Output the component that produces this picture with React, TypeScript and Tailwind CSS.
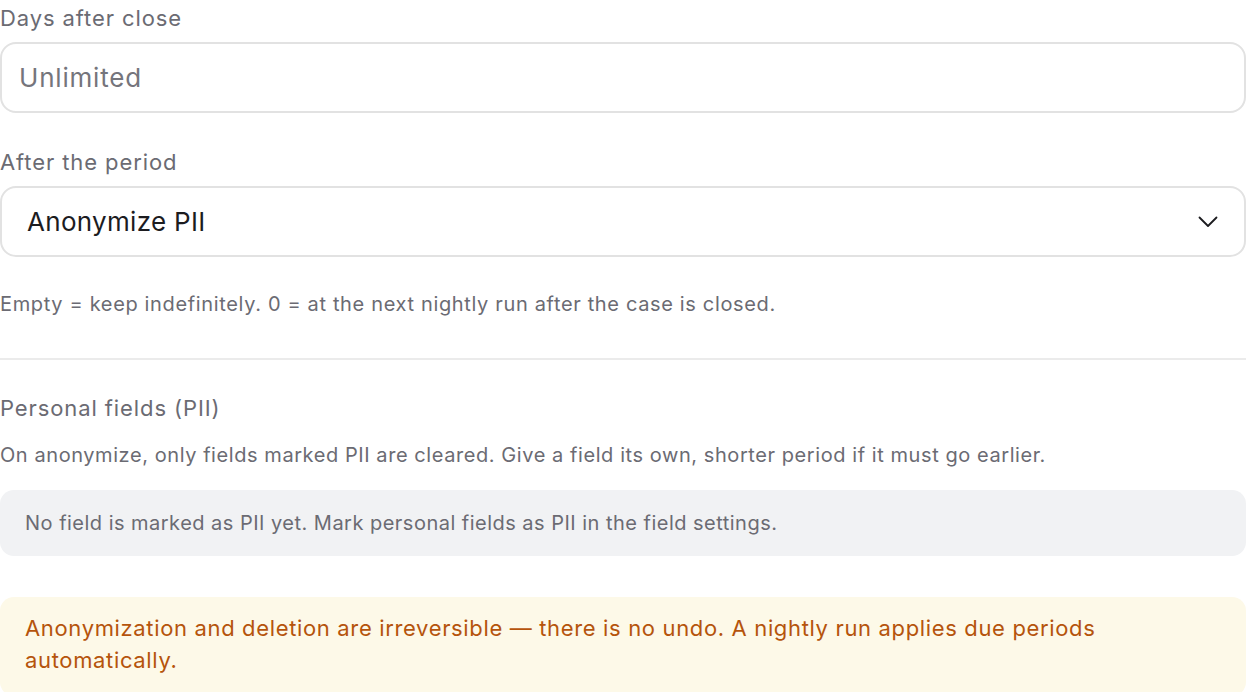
import React from "react";

export default function App() {
  return (
    <div className="w-[1246px] h-[692px] overflow-hidden bg-white" style={{ fontFamily: "Inter, 'Noto Sans', sans-serif" }}>
      <div className="flex flex-col">
        <label className="text-[22px] leading-[36px] tracking-[0.9px] text-[#6b6b73]">Days after close</label>
        <div className="mt-[6px] h-[71px] rounded-[16px] border-2 border-[#e2e2e2] flex items-center px-[17px]">
          <span className="text-[26px] tracking-[0.8px] text-[#75757c]">Unlimited</span>
        </div>
        <label className="mt-[31px] text-[22px] leading-[36px] tracking-[0.9px] text-[#6b6b73]">After the period</label>
        <div className="mt-[6px] h-[71px] rounded-[16px] border-2 border-[#e2e2e2] flex items-center justify-between pl-[25px] pr-[26px]">
          <span className="text-[26px] tracking-[0.3px] text-[#1c1c1f]">Anonymize PII</span>
          <svg width="20" height="12" viewBox="0 0 20 12" fill="none">
            <path d="M1.5 1.5 L10 10 L18.5 1.5" stroke="#1c1c1f" strokeWidth="1.8" strokeLinecap="round" strokeLinejoin="round" />
          </svg>
        </div>
        <p className="mt-[32px] text-[20px] leading-[30px] tracking-[0.65px] text-[#6b6b73]">Empty = keep indefinitely. 0 = at the next nightly run after the case is closed.</p>
        <div className="mt-[39px] h-[2px] bg-[#ebebeb]" />
        <h3 className="mt-[32px] text-[22px] leading-[32px] tracking-[0.9px] text-[#6b6b73]">Personal fields (PII)</h3>
        <p className="mt-[16px] text-[20px] leading-[30px] tracking-[0.57px] text-[#6b6b73]">On anonymize, only fields marked PII are cleared. Give a field its own, shorter period if it must go earlier.</p>
        <div className="mt-[20px] h-[66px] rounded-[14px] bg-[#f1f2f4] flex items-center px-[25px]">
          <span className="text-[20px] tracking-[0.48px] text-[#6b6b73]">No field is marked as PII yet. Mark personal fields as PII in the field settings.</span>
        </div>
        <div className="mt-[41px] rounded-[14px] bg-[#fdf9e8] pl-[25px] pr-[40px] pt-[15px] pb-[20px]">
          <p className="text-[22px] leading-[32px] tracking-[0.65px] text-[#b5540c]">Anonymization and deletion are irreversible — there is no undo. A nightly run applies due periods automatically.</p>
        </div>
      </div>
    </div>
  );
}
